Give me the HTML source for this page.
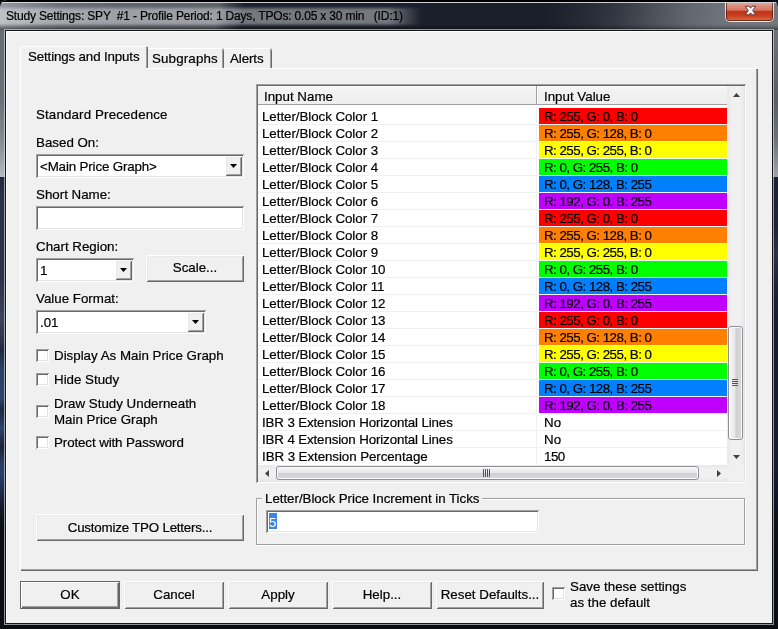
<!DOCTYPE html>
<html>
<head>
<meta charset="utf-8">
<title>Study Settings</title>
<style>
html,body{margin:0;padding:0;}
body{width:778px;height:629px;overflow:hidden;background:#0c0e14;font-family:"Liberation Sans",Arial,sans-serif;font-size:13.33px;color:#000;-webkit-text-stroke:0.2px #000;}
#win{position:absolute;left:0;top:0;width:778px;height:629px;overflow:hidden;will-change:transform;}
.abs{position:absolute;}
.t{position:absolute;white-space:pre;line-height:16px;height:16px;margin-top:1px;}
/* frame */
#frame{position:absolute;left:0;top:0;width:778px;height:629px;background:#0a0c12;}
#lframe{position:absolute;left:0;top:28px;width:5px;height:601px;
 background:linear-gradient(to bottom,#676c74 0,#69707b 70px,#7b838d 102px,#939aa3 125px,#b6bbc1 148px,#b6bbc1 148.5px,#222b3d 149.5px,#2a3346 170px,#2b3448 250px,#3a445a 290px,#2b3448 315px,#1f283c 322px,#2c4066 340px,#2e436a 370px,#1c2740 382px,#2f4369 400px,#1a2236 419px,#2c3f63 437px,#28406a 445px,#141a28 480px,#0a0d14 500px,#0a0c12 601px);}
#rframe{position:absolute;left:773px;top:28px;width:5px;height:601px;
 background:linear-gradient(to bottom,#6e737b 0,#595e67 70px,#6b717a 110px,#9da2aa 148px,#9da2aa 148.5px,#1a2234 149.5px,#1c2438 200px,#2a3248 225px,#1a2236 260px,#141c30 300px,#141c30 440px,#0c1018 500px,#0a0c12 601px);}
#titlebg{position:absolute;left:0;top:0;width:778px;height:30px;overflow:hidden;border-radius:7px 7px 0 0;
 background:linear-gradient(100deg,#979aa0 0,#858990 22px,#6a6e75 60px,#5e626a 120px,#5c6068 216px,#3a3e48 228px,#1a1f2b 242px,#1a1f2b 540px,#242934 575px,#333842 610px,#4b5059 645px,#62676f 680px,#6f747c 715px,#747981 778px);}
#glow{position:absolute;left:-10px;top:7.5px;width:432px;height:17px;background:linear-gradient(to right,rgba(255,255,255,.4) 0,rgba(255,255,255,.4) 398px,rgba(255,255,255,.2) 415px,rgba(255,255,255,0) 432px);filter:blur(1.8px);}
#titleshade{position:absolute;left:0;top:0;width:778px;height:30px;border-radius:7px 7px 0 0;
 background:linear-gradient(to bottom,#000 0,#000 1.6px,rgba(215,217,220,.95) 2px,rgba(215,217,220,.95) 3px,rgba(0,0,0,0) 3.2px,rgba(0,0,0,0) 24px,rgba(0,0,0,.15) 27px,rgba(0,0,0,.4) 29px);}
#inline{position:absolute;left:4px;top:29px;width:768px;height:594px;border:1px solid rgba(225,228,235,.62);}
#client{position:absolute;left:6px;top:31px;width:766px;height:592px;background:#f0f0f0;box-shadow:0 0 0 1px #14161a,inset 1px 1px #fff;}
/* classic 3d */
.sunken{position:absolute;background:#fff;box-shadow:inset 1px 1px #a0a0a0,inset -1px -1px #fff,inset 2px 2px #696969,inset -2px -2px #e3e3e3;}
.btn{position:absolute;background:#f0f0f0;box-shadow:inset 1px 1px #fff,inset -1px -1px #696969,inset 2px 2px #e9e9e9,inset -2px -2px #a0a0a0;text-align:center;}
.btn span{position:absolute;left:0;right:0;text-align:center;line-height:16px;white-space:pre;}
.chk{position:absolute;width:13px;height:13px;background:#fff;box-shadow:inset 1px 1px #a0a0a0,inset -1px -1px #fff,inset 2px 2px #696969,inset -2px -2px #e3e3e3;}
.row{position:absolute;left:0;width:469px;height:17px;}
.row .n{position:absolute;left:4px;top:1px;line-height:17px;white-space:pre;letter-spacing:-0.05px;}
.row .v{position:absolute;left:281px;top:1px;width:188px;height:16px;}
.row .v span{position:absolute;left:5px;top:1px;line-height:16px;white-space:pre;letter-spacing:-0.52px;}
.hl{position:absolute;left:0;width:469px;height:1px;background:#f1f1f1;}
</style>
</head>
<body>
<div id="win">
<div id="frame"></div>
<div id="lframe"></div>
<div id="rframe"></div>
<div id="titlebg"><div id="glow"></div></div>
<div id="titleshade"></div>
<div id="inline"></div>
<div class="t" id="title" style="left:6px;top:7px;font-size:12px;letter-spacing:-0.175px;color:#000;">Study Settings: SPY  #1 - Profile Period: 1 Days, TPOs: 0.05 x 30 min   (ID:1)</div>
<!-- close button -->
<div class="abs" id="closebtn" style="left:725px;top:3px;width:49px;height:19px;border-radius:0 0 5px 5px;border:1px solid rgba(255,255,255,.72);border-top:none;box-sizing:border-box;background:linear-gradient(to bottom,#e3a595 0,#df9686 2px,#db8270 5px,#d8715c 7.3px,#c0351a 8.2px,#c63a1d 12px,#d25c36 16px,#d97650 18px);box-shadow:inset 1px 0 rgba(70,20,12,.7),inset -1px 0 rgba(70,20,12,.7),inset 0 -1px rgba(70,20,12,.7);">
<svg class="abs" style="left:18px;top:2px" width="13" height="11" viewBox="0 0 13 11"><path d="M1.3 1.2 L5 1.2 L6.5 3.2 L8 1.2 L11.7 1.2 L8.6 5.5 L11.7 9.8 L8 9.8 L6.5 7.8 L5 9.8 L1.3 9.8 L4.4 5.5 Z" fill="#fff" stroke="#5b3f42" stroke-width="1" stroke-linejoin="round"/></svg>
</div>
<div id="client"></div>

<!-- tab pane -->
<div class="abs" id="pane" style="left:20px;top:68px;width:738px;height:503px;box-shadow:inset 1px 1px #fff,inset -1px -1px #696969,inset -2px -2px #a0a0a0;"></div>
<!-- tabs -->
<div class="abs" id="tab1" style="left:20px;top:46px;width:128px;height:22px;background:#f0f0f0;box-shadow:inset 1px 1px #fff,inset -1px 0 #696969,inset -2px 0 #a0a0a0;border-radius:2px 2px 0 0;"></div>
<div class="abs" style="left:21px;top:68px;width:126px;height:2px;background:#f0f0f0;"></div>
<div class="abs" id="tab2" style="left:148px;top:48px;width:76px;height:20px;background:#f0f0f0;box-shadow:inset 0 1px #fff,inset -1px 0 #696969,inset -2px 0 #a0a0a0;border-radius:0 2px 0 0;"></div>
<div class="abs" id="tab3" style="left:224px;top:48px;width:48px;height:20px;background:#f0f0f0;box-shadow:inset 0 1px #fff,inset -1px 0 #696969,inset -2px 0 #a0a0a0;border-radius:0 2px 0 0;"></div>
<div class="t" style="left:28px;top:48px;letter-spacing:-0.14px;">Settings and Inputs</div>
<div class="t" style="left:152px;top:50px;letter-spacing:0.15px;">Subgraphs</div>
<div class="t" style="left:230px;top:50px;letter-spacing:-0.1px;">Alerts</div>

<!-- left column -->
<div class="t" style="left:36px;top:106px;letter-spacing:0.14px;">Standard Precedence</div>
<div class="t" style="left:36px;top:134px;">Based On:</div>
<div class="sunken" style="left:36px;top:154px;width:208px;height:24px;"></div>
<div class="t" style="left:40px;top:158px;letter-spacing:-0.14px;">&lt;Main Price Graph&gt;</div>
<div class="btn" style="left:225px;top:156px;width:17px;height:20px;"><svg class="abs" style="left:5px;top:8px" width="7" height="4"><path d="M0 0H7L3.5 4Z" fill="#000"/></svg></div>

<div class="t" style="left:36px;top:186px;">Short Name:</div>
<div class="sunken" style="left:36px;top:206px;width:208px;height:24px;"></div>

<div class="t" style="left:36px;top:238px;">Chart Region:</div>
<div class="sunken" style="left:36px;top:258px;width:98px;height:24px;"></div>
<div class="t" style="left:40px;top:262px;">1</div>
<div class="btn" style="left:115px;top:260px;width:17px;height:20px;"><svg class="abs" style="left:5px;top:8px" width="7" height="4"><path d="M0 0H7L3.5 4Z" fill="#000"/></svg></div>
<div class="btn" style="left:146px;top:255px;width:98px;height:27px;"><span style="top:5px;">Scale...</span></div>

<div class="t" style="left:36px;top:290px;">Value Format:</div>
<div class="sunken" style="left:36px;top:310px;width:170px;height:24px;"></div>
<div class="t" style="left:40px;top:314px;">.01</div>
<div class="btn" style="left:187px;top:312px;width:17px;height:20px;"><svg class="abs" style="left:5px;top:8px" width="7" height="4"><path d="M0 0H7L3.5 4Z" fill="#000"/></svg></div>

<div class="chk" style="left:36px;top:349px;"></div>
<div class="t" style="left:54px;top:347px;">Display As Main Price Graph</div>
<div class="chk" style="left:36px;top:373px;"></div>
<div class="t" style="left:54px;top:371px;">Hide Study</div>
<div class="chk" style="left:36px;top:405px;"></div>
<div class="t" style="left:54px;top:395px;">Draw Study Underneath</div>
<div class="t" style="left:54px;top:411px;">Main Price Graph</div>
<div class="chk" style="left:36px;top:436px;"></div>
<div class="t" style="left:54px;top:434px;letter-spacing:-0.1px;">Protect with Password</div>

<div class="btn" style="left:36px;top:514px;width:208px;height:27px;"><span style="top:6px;letter-spacing:-0.2px;">Customize TPO Letters...</span></div>

<!-- list view -->
<div class="sunken" id="list" style="left:256px;top:84px;width:490px;height:399px;"></div>
<div class="abs" id="lv" style="left:258px;top:86px;width:486px;height:395px;overflow:hidden;background:#fff;"><div class="abs" style="left:0;top:1px;width:486px;height:394px;">
 <div class="abs" id="hdr" style="left:0;top:-1px;width:470px;height:19px;background:linear-gradient(#fafafa,#f1f1f2 25%,#efeff0);border-bottom:1px solid #a0a0a0;box-sizing:border-box;"></div>
 <div class="abs" style="left:278px;top:-1px;width:1px;height:18px;background:#a0a0a0;box-shadow:1px 0 #fff;"></div>
 <div class="t" style="left:6px;top:1px;">Input Name</div>
 <div class="t" style="left:286px;top:1px;">Input Value</div>
 <div class="abs" style="left:278px;top:19px;width:1px;height:360px;background:#f0f0f0;"></div>
 <div id="rows">
<div class="row" style="top:20px"><span class="n">Letter/Block Color 1</span><div class="v" style="background:#ff0000"><span>R: 255, G: 0, B: 0</span></div></div>
<div class="hl" style="top:37px"></div>
<div class="row" style="top:37px"><span class="n">Letter/Block Color 2</span><div class="v" style="background:#ff8000"><span>R: 255, G: 128, B: 0</span></div></div>
<div class="hl" style="top:54px"></div>
<div class="row" style="top:54px"><span class="n">Letter/Block Color 3</span><div class="v" style="background:#ffff00"><span>R: 255, G: 255, B: 0</span></div></div>
<div class="hl" style="top:71px"></div>
<div class="row" style="top:71px"><span class="n">Letter/Block Color 4</span><div class="v" style="background:#00ff00"><span>R: 0, G: 255, B: 0</span></div></div>
<div class="hl" style="top:88px"></div>
<div class="row" style="top:88px"><span class="n">Letter/Block Color 5</span><div class="v" style="background:#0080ff"><span>R: 0, G: 128, B: 255</span></div></div>
<div class="hl" style="top:105px"></div>
<div class="row" style="top:105px"><span class="n">Letter/Block Color 6</span><div class="v" style="background:#c000ff"><span>R: 192, G: 0, B: 255</span></div></div>
<div class="hl" style="top:122px"></div>
<div class="row" style="top:122px"><span class="n">Letter/Block Color 7</span><div class="v" style="background:#ff0000"><span>R: 255, G: 0, B: 0</span></div></div>
<div class="hl" style="top:139px"></div>
<div class="row" style="top:139px"><span class="n">Letter/Block Color 8</span><div class="v" style="background:#ff8000"><span>R: 255, G: 128, B: 0</span></div></div>
<div class="hl" style="top:156px"></div>
<div class="row" style="top:156px"><span class="n">Letter/Block Color 9</span><div class="v" style="background:#ffff00"><span>R: 255, G: 255, B: 0</span></div></div>
<div class="hl" style="top:173px"></div>
<div class="row" style="top:173px"><span class="n">Letter/Block Color 10</span><div class="v" style="background:#00ff00"><span>R: 0, G: 255, B: 0</span></div></div>
<div class="hl" style="top:190px"></div>
<div class="row" style="top:190px"><span class="n">Letter/Block Color 11</span><div class="v" style="background:#0080ff"><span>R: 0, G: 128, B: 255</span></div></div>
<div class="hl" style="top:207px"></div>
<div class="row" style="top:207px"><span class="n">Letter/Block Color 12</span><div class="v" style="background:#c000ff"><span>R: 192, G: 0, B: 255</span></div></div>
<div class="hl" style="top:224px"></div>
<div class="row" style="top:224px"><span class="n">Letter/Block Color 13</span><div class="v" style="background:#ff0000"><span>R: 255, G: 0, B: 0</span></div></div>
<div class="hl" style="top:241px"></div>
<div class="row" style="top:241px"><span class="n">Letter/Block Color 14</span><div class="v" style="background:#ff8000"><span>R: 255, G: 128, B: 0</span></div></div>
<div class="hl" style="top:258px"></div>
<div class="row" style="top:258px"><span class="n">Letter/Block Color 15</span><div class="v" style="background:#ffff00"><span>R: 255, G: 255, B: 0</span></div></div>
<div class="hl" style="top:275px"></div>
<div class="row" style="top:275px"><span class="n">Letter/Block Color 16</span><div class="v" style="background:#00ff00"><span>R: 0, G: 255, B: 0</span></div></div>
<div class="hl" style="top:292px"></div>
<div class="row" style="top:292px"><span class="n">Letter/Block Color 17</span><div class="v" style="background:#0080ff"><span>R: 0, G: 128, B: 255</span></div></div>
<div class="hl" style="top:309px"></div>
<div class="row" style="top:309px"><span class="n">Letter/Block Color 18</span><div class="v" style="background:#c000ff"><span>R: 192, G: 0, B: 255</span></div></div>
<div class="hl" style="top:326px"></div>
<div class="row" style="top:326px"><span class="n" style="letter-spacing:-0.13px">IBR 3 Extension Horizontal Lines</span><div class="v"><span style="letter-spacing:0">No</span></div></div>
<div class="hl" style="top:343px"></div>
<div class="row" style="top:343px"><span class="n" style="letter-spacing:-0.13px">IBR 4 Extension Horizontal Lines</span><div class="v"><span style="letter-spacing:0">No</span></div></div>
<div class="hl" style="top:360px"></div>
<div class="row" style="top:360px"><span class="n" style="letter-spacing:-0.07px">IBR 3 Extension Percentage</span><div class="v"><span>150</span></div></div>
</div>
 <!-- v scrollbar -->
 <div class="abs" style="left:469px;top:-1px;width:17px;height:379px;background:linear-gradient(to right,#e9e9eb,#f0f0f1 30%,#f1f1f2 70%,#e9e9eb);"></div>
 <svg class="abs" style="left:475px;top:6px" width="7" height="4"><path d="M0 4H7L3.5 0Z" fill="#404040"/></svg>
 <svg class="abs" style="left:475px;top:368px" width="7" height="4"><path d="M0 0H7L3.5 4Z" fill="#404040"/></svg>
 <div class="abs" style="left:470px;top:239px;width:15px;height:114px;border:1px solid #8f8f91;border-radius:3px;box-sizing:border-box;box-shadow:inset 0 0 0 1px rgba(255,255,255,.85);background:linear-gradient(to right,#f6f6f8,#e8e8ea 47%,#d0d0d2 52%,#dadadc);"></div>
 <div class="abs" style="left:474px;top:292px;width:6px;height:1px;background:#555;box-shadow:0 2px #555,0 4px #555,0 6px #555;"></div>
 <!-- h scrollbar -->
 <div class="abs" style="left:0;top:378px;width:486px;height:16px;background:linear-gradient(to bottom,#e9e9eb,#f0f0f1 30%,#f1f1f2 70%,#e9e9eb);"></div><div class="abs" style="left:470px;top:378px;width:16px;height:16px;background:#f0f0f0;"></div>
 <svg class="abs" style="left:7px;top:383px" width="4" height="7"><path d="M4 0V7L0 3.5Z" fill="#404040"/></svg>
 <svg class="abs" style="left:459px;top:383px" width="4" height="7"><path d="M0 0V7L4 3.5Z" fill="#404040"/></svg>
 <div class="abs" style="left:18px;top:379px;width:423px;height:14px;border:1px solid #8f8f91;border-radius:3px;box-sizing:border-box;box-shadow:inset 0 0 0 1px rgba(255,255,255,.85);background:linear-gradient(to bottom,#f6f6f8,#e8e8ea 47%,#d0d0d2 52%,#dadadc);"></div>
 <div class="abs" style="left:225px;top:382px;width:1px;height:8px;background:#555;box-shadow:2px 0 #555,4px 0 #555,6px 0 #555;"></div>
</div>

</div>
<!-- group box -->
<div class="abs" style="left:256px;top:498px;width:489px;height:47px;border:1px solid #a0a0a0;box-sizing:border-box;box-shadow:1px 1px #fff,inset 1px 1px #fff;"></div>
<div class="t" style="left:262px;top:490px;background:#f0f0f0;padding:0 3px;letter-spacing:-0.03px;">Letter/Block Price Increment in Ticks</div>
<div class="sunken" style="left:266px;top:510px;width:273px;height:23px;"></div>
<div class="abs" style="left:269px;top:513px;width:8px;height:16px;background:#3b86e2;"></div>
<div class="t" style="left:269px;top:514px;color:#fff;-webkit-text-stroke:0;">5</div>

<!-- bottom buttons -->
<div class="btn" style="left:20px;top:581px;width:100px;height:28px;box-shadow:inset 0 0 0 1px #646464,inset 2px 2px #fff,inset -2px -2px #696969,inset -3px -3px #a0a0a0;"><span style="top:6px;">OK</span></div>
<div class="btn" style="left:124px;top:581px;width:100px;height:28px;"><span style="top:6px;">Cancel</span></div>
<div class="btn" style="left:228px;top:581px;width:100px;height:28px;"><span style="top:6px;">Apply</span></div>
<div class="btn" style="left:332px;top:581px;width:100px;height:28px;"><span style="top:6px;">Help...</span></div>
<div class="btn" style="left:436px;top:581px;width:108px;height:28px;"><span style="top:6px;">Reset Defaults...</span></div>
<div class="chk" style="left:552px;top:587px;"></div>
<div class="t" style="left:570px;top:578px;">Save these settings</div>
<div class="t" style="left:570px;top:594px;">as the default</div>
</div>
</body>
</html>
